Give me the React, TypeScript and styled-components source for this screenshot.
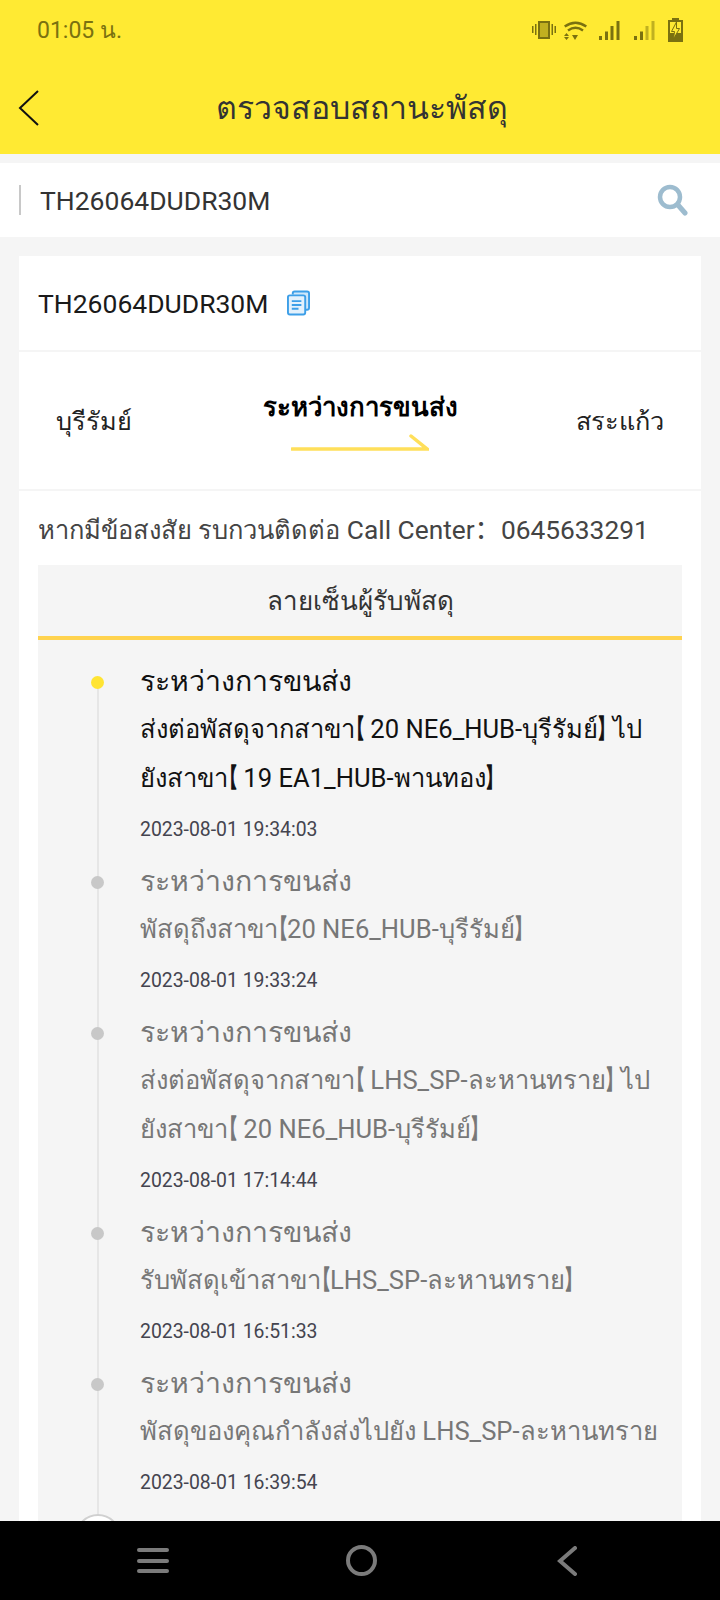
import styled, { createGlobalStyle } from "styled-components";

const GlobalStyle = createGlobalStyle`
    * {
        box-sizing: border-box;
    }

    body {
        margin: 0;
        background: #f5f5f5;
        font-family: Roboto, "Noto Sans", "Noto Sans CJK SC", "Liberation Sans", sans-serif;
    }
`;

type TrackItem = {
    desc: string[];
    date: string;
};

const trackItems: TrackItem[] = [
    {
        desc: ["ส่งต่อพัสดุจากสาขา【 20 NE6_HUB-บุรีรัมย์】 ไป", "ยังสาขา【 19 EA1_HUB-พานทอง】"],
        date: "2023-08-01 19:34:03",
    },
    {
        desc: ["พัสดุถึงสาขา【20 NE6_HUB-บุรีรัมย์】"],
        date: "2023-08-01 19:33:24",
    },
    {
        desc: ["ส่งต่อพัสดุจากสาขา【 LHS_SP-ละหานทราย】 ไป", "ยังสาขา【 20 NE6_HUB-บุรีรัมย์】"],
        date: "2023-08-01 17:14:44",
    },
    {
        desc: ["รับพัสดุเข้าสาขา【LHS_SP-ละหานทราย】"],
        date: "2023-08-01 16:51:33",
    },
    {
        desc: ["พัสดุของคุณกำลังส่งไปยัง LHS_SP-ละหานทราย"],
        date: "2023-08-01 16:39:54",
    },
];

// the app draws these brackets much narrower than the font does
const renderLine = (line: string) =>
    line.split(/([【】])/).map((part, index) =>
        part === "【" || part === "】" ? <Bracket key={index}>{part}</Bracket> : part
    );

const StatusIcons = () => (
    <StatusIconRow>
        <StatusIcon $left={0} width="24" height="18" viewBox="0 0 24 18" fill="#7a7110">
            <rect x="0" y="5" width="1.5" height="7" />
            <rect x="3" y="3" width="1.5" height="11" />
            <rect x="7" y="1" width="10" height="16" fill="#c0b020" stroke="#7a7110" strokeWidth="2" />
            <rect x="19.5" y="3" width="1.5" height="11" />
            <rect x="22.5" y="5" width="1.5" height="7" />
        </StatusIcon>
        <StatusIcon $left={8} width="23" height="19" viewBox="0 0 23 19" fill="none" stroke="#7a7110" strokeWidth="2.4">
            <path d="M0.7 5.5 Q11.5 -2 22.3 5.5" />
            <path d="M4 9.5 Q11.5 4 19 9.5" />
            <path d="M2.5 12 L5 15 H0 Z M0 16 H5 L2.5 19 Z M8 14 H14 L11 19 Z" fill="#7a7110" stroke="none" />
        </StatusIcon>
        <StatusIcon $left={12} width="21" height="19" viewBox="0 0 21 19" fill="#7a7110">
            <rect x="0" y="15" width="3" height="4" />
            <rect x="6" y="10.5" width="3" height="8.5" />
            <rect x="11.5" y="5" width="3" height="14" />
            <rect x="17.5" y="0" width="3" height="19" />
        </StatusIcon>
        <StatusIcon $left={14} width="21" height="19" viewBox="0 0 21 19" fill="#7a7110">
            <rect x="0" y="15" width="3" height="4" />
            <rect x="6" y="10.5" width="3" height="8.5" />
            <rect x="11.5" y="5" width="3" height="14" fill="#c0b020" />
            <rect x="17.5" y="0" width="3" height="19" fill="#c0b020" />
        </StatusIcon>
        <StatusIcon $left={13} width="15" height="24" viewBox="0 0 15 24">
            <path d="M4 0h7v2h4v22H0V2h4z" fill="#7a7110" />
            <rect x="2" y="4" width="11" height="11" fill="#ffea33" />
            <path d="M8.5 4 L3.5 13.5 H6.5 L5.5 21 L11.5 10.5 H8.5 Z" fill="#ffea33" stroke="#7a7110" strokeWidth="1" />
        </StatusIcon>
    </StatusIconRow>
);

const App = () => {
    return (
        <Screen>
            <GlobalStyle />
            <Header>
                <StatusBar>
                    <StatusTime>01:05 น.</StatusTime>
                    <StatusIcons />
                </StatusBar>
                <TitleBar>
                    <BackButton>
                        <svg width="22" height="36" viewBox="0 0 22 36" fill="none" stroke="#111" strokeWidth="2">
                            <path d="M20 1 L2 18 L20 35" />
                        </svg>
                    </BackButton>
                    <Title>ตรวจสอบสถานะพัสดุ</Title>
                </TitleBar>
            </Header>

            <Content>
                <SearchBar>
                    <SearchInput>TH26064DUDR30M</SearchInput>
                    <svg width="32" height="32" viewBox="0 0 32 32" fill="none" stroke="#9dbccf">
                        <circle cx="14" cy="13" r="10" strokeWidth="4.5" />
                        <path d="M22 21 L29 29" strokeWidth="5" strokeLinecap="round" />
                    </svg>
                </SearchBar>

                <Card>
                    <CodeRow>
                        <span>TH26064DUDR30M</span>
                        <svg width="23" height="26" viewBox="0 0 24 26" fill="none" stroke="#3d9fe8" strokeWidth="2">
                            <path d="M6 4 V3 a2 2 0 0 1 2 -2 H21 a2 2 0 0 1 2 2 V18 a2 2 0 0 1 -2 2 H19" fill="#cfe7fa" />
                            <rect x="1" y="5" width="18" height="20" rx="2" fill="#e3f1fc" />
                            <path d="M5 11 H15 M5 15 H15 M5 19 H12" />
                        </svg>
                    </CodeRow>

                    <RouteRow>
                        <RouteCity>บุรีรัมย์</RouteCity>
                        <RouteMiddle>
                            <RouteStatus>ระหว่างการขนส่ง</RouteStatus>
                            <svg width="138" height="18" viewBox="0 0 138 18" fill="none" stroke="#ffdf5a" strokeWidth="3.5" strokeLinecap="round">
                                <path d="M1 15 H136 L120 2" />
                            </svg>
                        </RouteMiddle>
                        <RouteCityEnd>สระแก้ว</RouteCityEnd>
                    </RouteRow>

                    <ContactLine>
                        <ContactThai>หากมีข้อสงสัย รบกวนติดต่อ</ContactThai> Call Center：0645633291
                    </ContactLine>

                    <Panel>
                        <PanelTab>ลายเซ็นผู้รับพัสดุ</PanelTab>
                        <Timeline>
                            {trackItems.map((item, index) => (
                                <TimelineItem key={item.date}>
                                    <Dot $active={index === 0} />
                                    <ItemTitle $active={index === 0}>ระหว่างการขนส่ง</ItemTitle>
                                    {item.desc.map((line) => (
                                        <ItemDesc key={line} $active={index === 0}>{renderLine(line)}</ItemDesc>
                                    ))}
                                    <ItemDate>{item.date}</ItemDate>
                                </TimelineItem>
                            ))}
                            <TimelineEnd />
                        </Timeline>
                    </Panel>
                </Card>
            </Content>

            <NavBar>
                <svg width="32" height="30" viewBox="0 0 32 30" fill="#7b7b7b">
                    <rect x="0" y="2" width="32" height="4" rx="2" />
                    <rect x="0" y="13" width="32" height="4" rx="2" />
                    <rect x="0" y="23" width="32" height="4" rx="2" />
                </svg>
                <HomeIcon width="31" height="31" viewBox="0 0 31 31" fill="none" stroke="#7b7b7b" strokeWidth="4">
                    <circle cx="15.5" cy="15.5" r="13.5" />
                </HomeIcon>
                <svg width="20" height="30" viewBox="0 0 20 30" fill="none" stroke="#7b7b7b" strokeWidth="4" strokeLinecap="round">
                    <path d="M18 2 L3 15 L18 28" />
                </svg>
            </NavBar>
        </Screen>
    );
};

export default App;

const Screen = styled.div`
    width: 720px;
    height: 1600px;
    display: flex;
    flex-direction: column;
    overflow: hidden;
    background: #f5f5f5;
`;

const Header = styled.header`
    height: 154px;
    flex-shrink: 0;
    background: #ffea33;
`;

const StatusBar = styled.div`
    height: 60px;
    padding: 0 37px;
    display: flex;
    align-items: center;
    justify-content: space-between;
`;

const StatusTime = styled.span`
    font-size: 23px;
    color: #7a7110;
`;

const StatusIconRow = styled.div`
    display: flex;
    align-items: center;
`;

const StatusIcon = styled.svg<{ $left: number }>`
    margin-left: ${(props) => props.$left}px;
`;

const TitleBar = styled.div`
    position: relative;
    height: 94px;
    padding-left: 4px;
    display: flex;
    align-items: center;
    justify-content: center;
`;

const BackButton = styled.div`
    position: absolute;
    left: 18px;
    top: 30px;
    line-height: 0;
`;

const Title = styled.h1`
    margin: 0;
    font-size: 32px;
    font-weight: 400;
    color: #333;
`;

const Content = styled.main`
    flex: 1;
    min-height: 0;
    overflow: hidden;
    padding-top: 9px;
`;

const SearchBar = styled.div`
    height: 74px;
    padding: 0 32px 0 19px;
    display: flex;
    align-items: center;
    justify-content: space-between;
    background: #fff;
`;

const SearchInput = styled.div`
    height: 30px;
    padding-left: 19px;
    border-left: 2px solid #c8c8c8;
    font-size: 26.5px;
    line-height: 32px;
    color: #333;
`;

const Card = styled.section`
    margin: 19px 19px 0;
    background: #fff;
`;

const CodeRow = styled.div`
    height: 96px;
    padding: 0 19px;
    display: flex;
    align-items: center;
    gap: 19px;
    border-bottom: 2px solid #f5f5f5;
    font-size: 26.5px;
    color: #1a1a1a;
`;

const RouteRow = styled.div`
    height: 139px;
    padding: 0 37px;
    display: grid;
    grid-template-columns: 1fr auto 1fr;
    align-items: center;
    border-bottom: 2px solid #f5f5f5;
`;

const RouteCity = styled.span`
    font-size: 25.3px;
    color: #222;
`;

const RouteCityEnd = styled(RouteCity)`
    justify-self: end;
`;

const RouteMiddle = styled.div`
    padding-bottom: 4px;
    display: flex;
    flex-direction: column;
    align-items: center;
    gap: 7px;
`;

const RouteStatus = styled.span`
    font-size: 25.8px;
    font-weight: 700;
    color: #000;
`;

const ContactLine = styled.p`
    margin: 0;
    padding: 20px 19px 0;
    height: 74px;
    font-size: 26.3px;
    line-height: 38px;
    color: #444;
    white-space: nowrap;
`;

const ContactThai = styled.span`
    font-size: 25.5px;
`;

const Panel = styled.div`
    margin: 0 19px;
    background: #f5f5f5;
`;

const PanelTab = styled.div`
    height: 75px;
    display: flex;
    align-items: center;
    justify-content: center;
    border-bottom: 4px solid #ffd34f;
    font-size: 26px;
    color: #333;
`;

const Timeline = styled.div`
    padding: 19px 0 0 102px;
`;

const TimelineItem = styled.div`
    position: relative;
    padding-bottom: 15px;

    &::before {
        content: "";
        position: absolute;
        left: -43px;
        top: 20px;
        bottom: -20px;
        width: 2px;
        background: #e6e6e6;
    }
`;

const Dot = styled.span<{ $active: boolean }>`
    position: absolute;
    left: -49px;
    top: 17px;
    width: 13px;
    height: 13px;
    border-radius: 50%;
    background: ${(props) => (props.$active ? "#ffe433" : "#c8c8c8")};
`;

const ItemTitle = styled.div<{ $active: boolean }>`
    font-size: 28.5px;
    line-height: 46px;
    color: ${(props) => (props.$active ? "#111" : "#777")};
`;

const ItemDesc = styled.div<{ $active: boolean }>`
    font-size: 25.6px;
    line-height: 49px;
    white-space: nowrap;
    color: ${(props) => (props.$active ? "#111" : "#777")};
`;

const Bracket = styled.span`
    display: inline-block;
    width: 8px;
    margin-left: 1px;
    font-feature-settings: "palt";
    -webkit-text-stroke: 1.6px currentColor;
    transform: scaleX(0.55);
    transform-origin: left;
`;

const ItemDate = styled.div`
    margin-top: 13px;
    font-size: 19.4px;
    line-height: 28px;
    color: #44444f;
`;

const TimelineEnd = styled.div`
    position: relative;
    width: 46px;
    height: 46px;
    margin: 2px 0 0 -65px;
    border-radius: 50%;
    background: #fff;
    border: 2px solid #d0d0d0;
`;

const NavBar = styled.nav`
    height: 79px;
    flex-shrink: 0;
    padding: 0 143px 0 137px;
    display: flex;
    align-items: center;
    justify-content: space-between;
    background: #000;
`;

const HomeIcon = styled.svg`
    margin-right: 4px;
`;
